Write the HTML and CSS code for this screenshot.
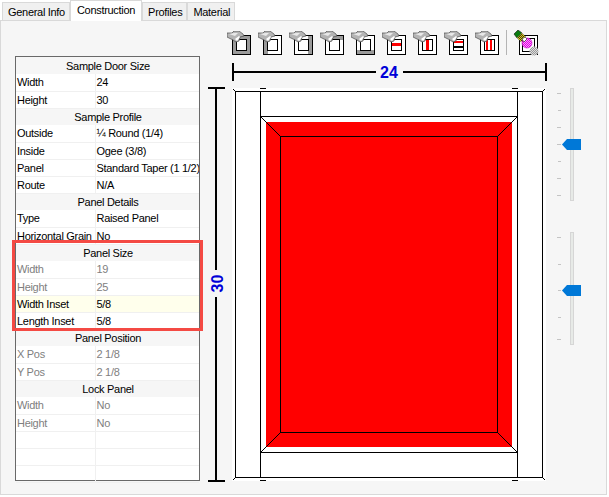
FILE: index.html
```html
<!DOCTYPE html>
<html lang="en">

<head>
    <meta charset="UTF-8">
    <title>Construction</title>
    <link rel="stylesheet" href="styles.css">
</head>

<body>
    <svg class="defs" width="0" height="0">
        <symbol id="hand" viewBox="0 0 24 24">
            <path d="M0 2 L5 2 L7 0 L12 0 L16 3 L17 5 L13 6 L12 10 L9 11 L6 9 L0 6 Z" fill="#b4b4b4" stroke="#4a4a4a" stroke-width="0.7"/>
            <path d="M2 3 L7 2 L11 2 L8 5 Z" fill="#e8e8e8"/>
            <path d="M8 8 L12 5 L13 6 L10 10 Z" fill="#fff"/>
        </symbol>
        <pattern id="check" width="2" height="2" patternUnits="userSpaceOnUse">
            <rect width="2" height="2" fill="#ff9cff"/>
            <rect width="1" height="1" fill="#e000e0"/>
            <rect x="1" y="1" width="1" height="1" fill="#e000e0"/>
        </pattern>
        <pattern id="check-y" width="2" height="2" patternUnits="userSpaceOnUse">
            <rect width="2" height="2" fill="#f0d800"/>
            <rect width="1" height="1" fill="#333"/>
            <rect x="1" y="1" width="1" height="1" fill="#333"/>
        </pattern>
        <pattern id="check-g" width="2" height="2" patternUnits="userSpaceOnUse">
            <rect width="2" height="2" fill="#ddd"/>
            <rect width="1" height="1" fill="#999"/>
            <rect x="1" y="1" width="1" height="1" fill="#999"/>
        </pattern>
    </svg>

    <div class="tabs">
        <div class="tab">General Info</div>
        <div class="tab active">Construction</div>
        <div class="tab">Profiles</div>
        <div class="tab">Material</div>
    </div>

    <div class="panel">
        <div class="grid-wrap">
            <table class="props">
                <colgroup>
                    <col class="col-name">
                    <col>
                </colgroup>
                <tr class="head"><td colspan="2">Sample Door Size</td></tr>
                <tr><td>Width</td><td>24</td></tr>
                <tr><td>Height</td><td>30</td></tr>
                <tr class="head"><td colspan="2">Sample Profile</td></tr>
                <tr><td>Outside</td><td>¼ Round (1/4)</td></tr>
                <tr><td>Inside</td><td>Ogee (3/8)</td></tr>
                <tr><td>Panel</td><td>Standard Taper (1 1/2)</td></tr>
                <tr><td>Route</td><td>N/A</td></tr>
                <tr class="head"><td colspan="2">Panel Details</td></tr>
                <tr><td>Type</td><td>Raised Panel</td></tr>
                <tr><td>Horizontal Grain</td><td>No</td></tr>
                <tr class="head"><td colspan="2">Panel Size</td></tr>
                <tr class="off"><td>Width</td><td>19</td></tr>
                <tr class="off"><td>Height</td><td>25</td></tr>
                <tr class="current"><td>Width Inset</td><td>5/8</td></tr>
                <tr><td>Length Inset</td><td>5/8</td></tr>
                <tr class="head"><td colspan="2">Panel Position</td></tr>
                <tr class="off"><td>X Pos</td><td>2 1/8</td></tr>
                <tr class="off"><td>Y Pos</td><td>2 1/8</td></tr>
                <tr class="head"><td colspan="2">Lock Panel</td></tr>
                <tr class="off"><td>Width</td><td>No</td></tr>
                <tr class="off"><td>Height</td><td>No</td></tr>
                <tr><td></td><td></td></tr>
                <tr><td></td><td></td></tr>
                <tr><td></td><td></td></tr>
            </table>
            <div class="highlight"></div>
        </div>

        <div class="work">
            <div class="toolbar">
                <svg class="tool" viewBox="0 0 24 24">
                    <rect x="5.5" y="4.5" width="18" height="19" fill="#fff" stroke="#000"/>
                    <path d="M6 5H23V23H6Z M10 9V19H19V9Z" fill="#9a9a9a" fill-rule="evenodd"/>
                    <rect x="9.5" y="8.5" width="10" height="11" fill="#fff" stroke="#000"/>
                    <use href="#hand" width="24" height="24"/>
                </svg>
                <svg class="tool" viewBox="0 0 24 24">
                    <rect x="5.5" y="4.5" width="18" height="19" fill="#fff" stroke="#000"/>
                    <rect x="6" y="5" width="4" height="18" fill="#9a9a9a"/>
                    <rect x="9.5" y="8.5" width="10" height="11" fill="#fff" stroke="#000"/>
                    <use href="#hand" width="24" height="24"/>
                </svg>
                <svg class="tool" viewBox="0 0 24 24">
                    <rect x="5.5" y="4.5" width="18" height="19" fill="#fff" stroke="#000"/>
                    <rect x="19" y="5" width="4" height="18" fill="#9a9a9a"/>
                    <rect x="9.5" y="8.5" width="10" height="11" fill="#fff" stroke="#000"/>
                    <use href="#hand" width="24" height="24"/>
                </svg>
                <svg class="tool" viewBox="0 0 24 24">
                    <rect x="5.5" y="4.5" width="18" height="19" fill="#fff" stroke="#000"/>
                    <rect x="6" y="5" width="17" height="4" fill="#9a9a9a"/>
                    <rect x="9.5" y="8.5" width="10" height="11" fill="#fff" stroke="#000"/>
                    <use href="#hand" width="24" height="24"/>
                </svg>
                <svg class="tool" viewBox="0 0 24 24">
                    <rect x="5.5" y="4.5" width="18" height="19" fill="#fff" stroke="#000"/>
                    <rect x="6" y="19" width="17" height="4" fill="#9a9a9a"/>
                    <rect x="9.5" y="8.5" width="10" height="11" fill="#fff" stroke="#000"/>
                    <use href="#hand" width="24" height="24"/>
                </svg>
                <svg class="tool" viewBox="0 0 24 24">
                    <rect x="5.5" y="4.5" width="18" height="19" fill="#fff" stroke="#000"/>
                    <rect x="9.5" y="8.5" width="10" height="11" fill="#fff" stroke="#000"/>
                    <rect x="10" y="12" width="9" height="3" fill="#f00"/>
                    <use href="#hand" width="24" height="24"/>
                </svg>
                <svg class="tool" viewBox="0 0 24 24">
                    <rect x="5.5" y="4.5" width="18" height="19" fill="#fff" stroke="#000"/>
                    <rect x="9.5" y="8.5" width="10" height="11" fill="#fff" stroke="#000"/>
                    <rect x="13" y="9" width="3" height="10" fill="#f00"/>
                    <use href="#hand" width="24" height="24"/>
                </svg>
                <svg class="tool" viewBox="0 0 24 24">
                    <rect x="5.5" y="4.5" width="18" height="19" fill="#fff" stroke="#000"/>
                    <rect x="9.5" y="8.5" width="10" height="11" fill="#fff" stroke="#000"/>
                    <rect x="10" y="10" width="9" height="2" fill="#f00"/>
                    <rect x="10" y="15" width="9" height="2" fill="#000"/>
                    <use href="#hand" width="24" height="24"/>
                </svg>
                <svg class="tool" viewBox="0 0 24 24">
                    <rect x="5.5" y="4.5" width="18" height="19" fill="#fff" stroke="#000"/>
                    <rect x="9.5" y="8.5" width="10" height="11" fill="#fff" stroke="#000"/>
                    <rect x="11" y="9" width="2" height="10" fill="#f00"/>
                    <rect x="15" y="9" width="2" height="10" fill="#f00"/>
                    <use href="#hand" width="24" height="24"/>
                </svg>
                <div class="sep"></div>
                <svg class="tool tool-last" viewBox="0 0 26 26">
                    <rect x="6.5" y="5.5" width="18" height="19" fill="#fff" stroke="#000"/>
                    <rect x="9.5" y="8.5" width="12" height="13" fill="#fff" stroke="#000"/>
                    <path d="M1 4 L5 0 L9 3 L4 8 Z" fill="#0a7a10" stroke="#111" stroke-width="0.6"/>
                    <path d="M4 8 L9 3 L13 7 L8 12 Z" fill="url(#check-y)"/>
                    <circle cx="14" cy="13" r="5" fill="url(#check)" stroke="#c000c0" stroke-width="0.6"/>
                    <path d="M9 9 L12 7 L14 9 L11 12 Z" fill="#fff" stroke="#222" stroke-width="0.6"/>
                    <circle cx="21" cy="21" r="4.5" fill="url(#check-g)"/>
                </svg>
            </div>

            <svg class="door" width="340" height="422" viewBox="208 62 340 422">
                <!-- width dimension -->
                <g fill="#000">
                    <rect x="232" y="63" width="2" height="18"/>
                    <rect x="232" y="71" width="144" height="2"/>
                    <rect x="403" y="71" width="143" height="2"/>
                    <rect x="545" y="63" width="2" height="18"/>
                    <!-- height dimension -->
                    <rect x="208" y="87" width="17" height="2"/>
                    <rect x="215" y="87" width="2" height="183"/>
                    <rect x="215" y="297" width="2" height="184"/>
                    <rect x="208" y="480" width="17" height="2"/>
                </g>
                <text class="dim" x="389" y="78" text-anchor="middle">24</text>
                <text class="dim" transform="translate(223 283.5) rotate(-90)" text-anchor="middle">30</text>

                <rect x="232" y="88" width="314" height="393" fill="#fff"/>
                <rect x="266" y="122" width="246" height="325" fill="#f00"/>

                <g class="ln">
                    <rect x="235.5" y="91.5" width="307" height="386"/>
                    <path d="M260.5 91.5V477.5 M517.5 91.5V477.5 M260.5 116.5H517.5 M260.5 452.5H517.5"/>
                    <rect x="280.5" y="136.5" width="217" height="296"/>
                    <path d="M260.5 116.5L280.5 136.5 M517.5 116.5L497.5 136.5 M260.5 452.5L280.5 432.5 M517.5 452.5L497.5 432.5"/>
                    <path d="M233 89L235.5 91.5 M545 89L542.5 91.5 M233 480L235.5 477.5 M545 480L542.5 477.5"/>
                    <path d="M260 88.5H266 M512 88.5H518 M260 480.5H266 M512 480.5H518"/>
                </g>
            </svg>
        </div>

        <div class="sliders">
            <svg width="30" height="113" viewBox="555 88 30 113">
                <rect class="track" x="570.5" y="88.5" width="3" height="112"/>
                <path class="tick" d="M557 93.5H561 M558 110.5H561 M557 127.5H561 M557 144.5H561 M558 161.5H561 M557 178.5H561 M557 195.5H561"/>
                <path class="thumb" d="M562 144.5L567 139H581V150H567Z"/>
            </svg>
            <svg width="30" height="113" viewBox="555 232 30 113">
                <rect class="track" x="570.5" y="232.5" width="3" height="112"/>
                <path class="tick" d="M557 237.5H561 M558 264.5H561 M558 290.5H561 M558 317.5H561 M557 339.5H561"/>
                <path class="thumb" d="M562 290.5L567 285H581V296H567Z"/>
            </svg>
        </div>
    </div>
</body>

</html>
```

FILE: styles.css
```css
/* General */
body {
    margin: 0;
    background-color: #fff;
    font-family: "Liberation Sans", Arial, sans-serif;
    font-size: 11px;
    letter-spacing: -0.3px;
    color: #000;
}

.defs {
    position: absolute;
}

/* Tabs */
.tabs {
    display: flex;
    height: 20px;
    padding-left: 2px;
    align-items: flex-end;
}

.tab {
    height: 18px;
    line-height: 19px;
    padding: 0 4px 0 5px;
    border: 1px solid #d9d9d9;
    border-bottom: none;
    box-sizing: border-box;
    background-color: #f0f0f0;
}

.tab.active {
    position: relative;
    z-index: 1;
    height: 21px;
    margin: 0 0 -1px 0;
    line-height: 19px;
    padding: 0 6px;
    background-color: #fff;
}

/* Main panel */
.panel {
    display: flex;
    width: 607px;
    height: 475px;
    padding: 9px 0 0 14px;
    box-sizing: border-box;
    border: 1px solid #d9d9d9;
    background-color: #f6f6f6;
}

/* Property grid */
.grid-wrap {
    position: relative;
    flex: none;
    width: 185px;
    height: 425px;
    margin-top: 26px;
    border: 1px solid #696969;
    box-sizing: border-box;
    background-color: #fff;
}

.props {
    width: 183px;
    table-layout: fixed;
    border-collapse: collapse;
}

.col-name {
    width: 79px;
}

.props td {
    height: 17px;
    padding: 0 0 0 1px;
    border-bottom: 1px solid #f0f0f0;
    box-sizing: border-box;
    white-space: nowrap;
    overflow: hidden;
}

.props td:first-child {
    border-right: 1px solid #f0f0f0;
}

.props .head td {
    text-align: center;
    background-color: #f6f6f6;
    border: none;
}

.props .off td {
    color: #808080;
}

.props .current td {
    background-color: #ffffec;
}

.highlight {
    position: absolute;
    left: -4px;
    top: 183px;
    width: 191px;
    height: 91px;
    border: 3px solid #f44a44;
    box-sizing: border-box;
}

/* Toolbar and door */
.work {
    flex: none;
    width: 340px;
    margin-left: 8px;
}

.toolbar {
    display: flex;
    align-items: flex-start;
    height: 25px;
    padding-left: 19px;
}

.tool {
    width: 24px;
    height: 24px;
    margin-top: 1px;
    margin-right: 7px;
    flex: none;
}

.sep {
    width: 1px;
    height: 25px;
    margin-right: 6px;
    background-color: #b4b4b4;
}

.tool-last {
    width: 26px;
    height: 26px;
    margin-top: 0;
    margin-right: 0;
}

.door {
    display: block;
    margin-top: 7px;
}

.dim {
    font-family: "Liberation Sans", Arial, sans-serif;
    font-size: 16px;
    font-weight: bold;
    letter-spacing: 0;
    fill: #0000d8;
}

.ln {
    fill: none;
    stroke: #000;
    stroke-width: 1;
}

/* Sliders */
.sliders {
    display: flex;
    flex-direction: column;
    gap: 31px;
    margin: 58px 0 0 7px;
}

.sliders svg {
    display: block;
}

.track {
    fill: #e7eae7;
    stroke: #d6d6d6;
}

.tick {
    stroke: #c4c4c4;
    stroke-width: 1;
}

.thumb {
    fill: #0078d7;
}
```
